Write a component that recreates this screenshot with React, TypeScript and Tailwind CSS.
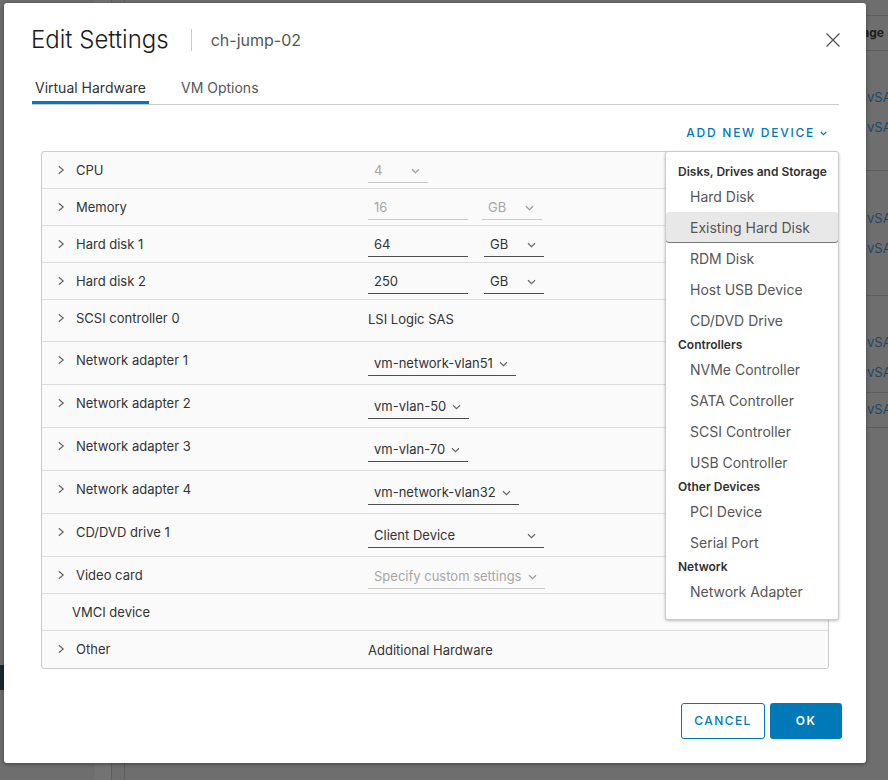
import clsx from 'clsx'

// Edit Settings dialog (Virtual Hardware tab) over a dimmed page

type Row = {
  label: string
  h: string
  expandable?: boolean
  value?: React.ReactNode
}

function RightChevron() {
  return (
    <svg width="10" height="10" viewBox="0 0 10 10" className="shrink-0">
      <path d="M2.8 1.2 L7.2 5 L2.8 8.8" fill="none" stroke="#666666" strokeWidth="1.2" />
    </svg>
  )
}

function Caret({ color = '#666666' }: { color?: string }) {
  return (
    <svg width="9" height="6" viewBox="0 0 9 6" className="shrink-0">
      <path d="M1 1.2 L4.5 4.6 L8 1.2" fill="none" stroke={color} strokeWidth="1.2" />
    </svg>
  )
}

function Select({
  value,
  disabled,
  width,
  className,
}: {
  value: string
  disabled?: boolean
  width?: string
  className?: string
}) {
  return (
    <div
      className={clsx(
        'flex h-[24px] items-center justify-between gap-[6px] border-b pl-[6px] pr-[8px] text-[13px]',
        disabled ? 'border-[#c8c8c8] text-[#a6a6a6]' : 'border-[#4d4d4d] text-[#333333]',
        width,
        className,
      )}
    >
      <span className="whitespace-nowrap">{value}</span>
      <Caret color={disabled ? '#9a9a9a' : '#666666'} />
    </div>
  )
}

function TextInput({ value, disabled }: { value: string; disabled?: boolean }) {
  return (
    <div
      className={clsx(
        'flex h-[24px] w-[100px] items-center border-b pl-[6px] text-[13px]',
        disabled ? 'border-[#c8c8c8] text-[#a6a6a6]' : 'border-[#4d4d4d] text-[#333333]',
      )}
    >
      {value}
    </div>
  )
}

const rows: Row[] = [
  { label: 'CPU', h: 'h-[37px]', expandable: true, value: <Select value="4" disabled width="w-[60px]" /> },
  {
    label: 'Memory',
    h: 'h-[37px]',
    expandable: true,
    value: (
      <div className="flex gap-[14px]">
        <TextInput value="16" disabled />
        <Select value="GB" disabled width="w-[60px]" />
      </div>
    ),
  },
  {
    label: 'Hard disk 1',
    h: 'h-[37px]',
    expandable: true,
    value: (
      <div className="flex gap-[16px]">
        <TextInput value="64" />
        <Select value="GB" width="w-[60px]" />
      </div>
    ),
  },
  {
    label: 'Hard disk 2',
    h: 'h-[37px]',
    expandable: true,
    value: (
      <div className="flex gap-[16px]">
        <TextInput value="250" />
        <Select value="GB" width="w-[60px]" />
      </div>
    ),
  },
  { label: 'SCSI controller 0', h: 'h-[42px]', expandable: true, value: <span className="block text-[13px] leading-[24px] text-[#333333]">LSI Logic SAS</span> },
  { label: 'Network adapter 1', h: 'h-[43px]', expandable: true, value: <Select value="vm-network-vlan51" className="mt-[3px]" /> },
  { label: 'Network adapter 2', h: 'h-[43px]', expandable: true, value: <Select value="vm-vlan-50" className="mt-[3px]" /> },
  { label: 'Network adapter 3', h: 'h-[43px]', expandable: true, value: <Select value="vm-vlan-70" className="mt-[3px]" /> },
  { label: 'Network adapter 4', h: 'h-[43px]', expandable: true, value: <Select value="vm-network-vlan32" className="mt-[3px]" /> },
  { label: 'CD/DVD drive 1', h: 'h-[43px]', expandable: true, value: <Select value="Client Device" width="w-[176px]" className="mt-[3px]" /> },
  { label: 'Video card', h: 'h-[37px]', expandable: true, value: <Select value="Specify custom settings" disabled width="w-[177px]" className="mt-[1px]" /> },
  { label: 'VMCI device', h: 'h-[37px]' },
  { label: 'Other', h: 'h-[37px]', expandable: true, value: <span className="block text-[13px] leading-[24px] text-[#333333]">Additional Hardware</span> },
]

type MenuEntry = { kind: 'header' | 'item'; text: string; active?: boolean }

const menu: MenuEntry[] = [
  { kind: 'header', text: 'Disks, Drives and Storage' },
  { kind: 'item', text: 'Hard Disk' },
  { kind: 'item', text: 'Existing Hard Disk', active: true },
  { kind: 'item', text: 'RDM Disk' },
  { kind: 'item', text: 'Host USB Device' },
  { kind: 'item', text: 'CD/DVD Drive' },
  { kind: 'header', text: 'Controllers' },
  { kind: 'item', text: 'NVMe Controller' },
  { kind: 'item', text: 'SATA Controller' },
  { kind: 'item', text: 'SCSI Controller' },
  { kind: 'item', text: 'USB Controller' },
  { kind: 'header', text: 'Other Devices' },
  { kind: 'item', text: 'PCI Device' },
  { kind: 'item', text: 'Serial Port' },
  { kind: 'header', text: 'Network' },
  { kind: 'item', text: 'Network Adapter' },
]

function AddDeviceMenu() {
  return (
    <div className="absolute right-0 top-full z-10 w-[174px] rounded-[3px] border border-[#cccccc] bg-white pb-[12px] pt-[11px] shadow-[0_1px_3px_rgba(0,0,0,0.25)]">
      {menu.map((m) =>
        m.kind === 'header' ? (
          <div key={m.text} className="flex h-[18px] items-center pl-[12px] text-[12px] font-semibold text-[#313131]">
            {m.text}
          </div>
        ) : (
          <div
            key={m.text}
            className={clsx(
              'flex h-[31px] items-center pl-[24px] text-[14px] text-[#565656]',
              m.active && 'rounded-[3px] bg-[#e8e8e8] shadow-[inset_0_-1px_0_#7a7a7a]',
            )}
          >
            {m.text}
          </div>
        ),
      )}
    </div>
  )
}

function Background() {
  return (
    <div className="flex h-full w-full bg-[#6e6e6e]">
      {/* left nav */}
      <div className="flex w-[95px] shrink-0 flex-col">
        <div className="mt-[665px] h-[25px] bg-[#1c2830]" />
      </div>
      <div className="w-[17px] shrink-0 border-r border-[#5f5f5f] bg-[#737373]" />
      <div className="w-[13px] shrink-0 border-r border-[#5f5f5f]" />
      {/* main page, storage column */}
      <div className="flex flex-1 justify-end overflow-hidden">
        <div className="mt-[15px] w-[50px] shrink-0 border-t border-[#5c5c5c]">
          <div className="flex h-[35px] items-center border-b border-[#5c5c5c] text-[12px] font-bold text-[#1e1e1e]">
            Storage
          </div>
          <div className="flex h-[120px] flex-col gap-[10px] border-b border-[#5c5c5c] pl-[29px] pt-[37px] text-[13px] text-[#1a4a66]">
            <span className="whitespace-nowrap">vSAN</span>
            <span className="whitespace-nowrap">vSAN</span>
          </div>
          <div className="flex h-[125px] flex-col gap-[10px] border-b border-[#5c5c5c] pl-[29px] pt-[38px] text-[13px] text-[#1a4a66]">
            <span className="whitespace-nowrap">vSAN</span>
            <span className="whitespace-nowrap">vSAN</span>
          </div>
          <div className="flex h-[97px] flex-col gap-[10px] border-b border-[#5c5c5c] pl-[29px] pt-[37px] text-[13px] text-[#1a4a66]">
            <span className="whitespace-nowrap">vSAN</span>
            <span className="whitespace-nowrap">vSAN</span>
          </div>
          <div className="flex h-[35px] items-center border-b border-[#5c5c5c] pl-[29px] text-[13px] text-[#1a4a66]">
            <span className="whitespace-nowrap">vSAN</span>
          </div>
        </div>
      </div>
    </div>
  )
}

export default function App() {
  return (
    <div className="relative h-[780px] w-[888px] overflow-hidden font-['Inter','Noto_Sans',sans-serif]">
      <Background />

      {/* modal */}
      <div className="absolute left-[4px] top-[3px] flex h-[760px] w-[862px] flex-col rounded-[3px] bg-white shadow-[0_1px_4px_rgba(0,0,0,0.4)]">
        <div className="flex items-center justify-between pl-[27px] pr-[26px] pt-[21px]">
          <div className="flex items-center">
            <h1 className="text-[24px] font-light leading-[32px] text-[#1b1b1b]">Edit Settings</h1>
            <div className="ml-[22px] h-[22px] w-px bg-[#cccccc]" />
            <span className="ml-[19px] text-[16px] text-[#565656]">ch-jump-02</span>
          </div>
          <svg width="14" height="14" viewBox="0 0 14 14">
            <path d="M0.5 0.5 L13.5 13.5 M13.5 0.5 L0.5 13.5" stroke="#555555" strokeWidth="1.3" />
          </svg>
        </div>

        <div className="ml-[28px] mr-[27px] mt-[22px] flex gap-[29px] border-b border-[#cccccc]">
          <div className="border-b-[3px] border-[#0079b8] px-[3px] pb-[3px] text-[14px] leading-[20px] text-[#333333]">
            Virtual Hardware
          </div>
          <div className="px-[3px] pb-[6px] text-[14px] leading-[20px] text-[#565656]">VM Options</div>
        </div>

        <div className="relative ml-[28px] mr-[27px] flex h-[46px] items-center justify-end pr-[12px] pt-[10px]">
          <div className="flex items-center gap-[5px] text-[12px] font-medium tracking-[0.145em] text-[#0079b8]">
            ADD NEW DEVICE
            <svg width="7" height="5" viewBox="0 0 7 5">
              <path d="M0.8 1 L3.5 3.7 L6.2 1" fill="none" stroke="#0079b8" strokeWidth="1.1" />
            </svg>
          </div>
          <AddDeviceMenu />
        </div>

        <div className="ml-[37px] mr-[37px] rounded-[3px] border border-[#cccccc] bg-[#fafafa]">
          {rows.map((r, i) => (
            <div
              key={r.label}
              className={clsx('flex items-start pt-[6px]', r.h, i < rows.length - 1 && 'border-b border-[#dddddd]')}
            >
              <div className={clsx('flex w-[326px] shrink-0 items-center gap-[10px]', r.expandable ? 'pl-[14px]' : 'pl-[30px]')}>
                {r.expandable && <RightChevron />}
                <span className="text-[13px] leading-[24px] text-[#333333]">{r.label}</span>
              </div>
              <div className="pt-[1px]">{r.value}</div>
            </div>
          ))}
        </div>

        <div className="mt-[34px] flex justify-end gap-[5px] pr-[24px]">
          <button className="h-[36px] w-[84px] rounded-[3px] border border-[#0079b8] bg-white text-[12px] font-medium tracking-[0.12em] text-[#0079b8]">
            CANCEL
          </button>
          <button className="h-[36px] w-[72px] rounded-[3px] bg-[#0079b8] text-[12px] font-semibold tracking-[0.12em] text-white">
            OK
          </button>
        </div>
      </div>
    </div>
  )
}
